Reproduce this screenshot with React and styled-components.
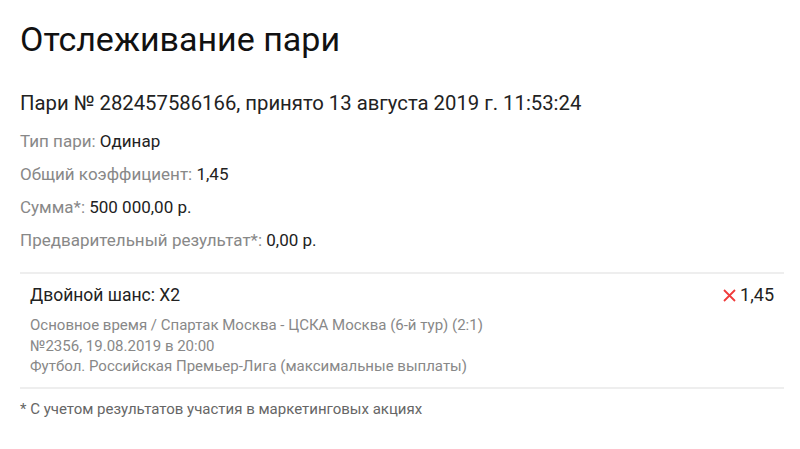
import React from 'react'
import styled, {createGlobalStyle} from 'styled-components'

const Global = createGlobalStyle`
  body {
    margin: 0;
    background: #fff;
    font-family: Roboto, "Noto Sans", sans-serif;
    color: #222;
  }
`

const Page = styled.div`
  padding: 13px 16px 0 20px;
`

const Title = styled.h1`
  margin: 0;
  font-size: 34px;
  font-weight: 400;
  line-height: 52px;
  color: #111;
`

const BetHead = styled.div`
  margin-top: 24px;
  font-size: 20.3px;
  line-height: 28px;
  color: #222;
`

const InfoList = styled.div`
  margin-top: 8px;
  display: flex;
  flex-direction: column;
`

const InfoRow = styled.div`
  font-size: 17px;
  line-height: 33px;
  color: #222;

  span {
    color: #888;
  }
`

const Event = styled.div`
  margin-top: 15px;
  border-top: 2px solid #eee;
  border-bottom: 2px solid #eee;
  padding: 9px 10px 10px 10px;
`

const EventTop = styled.div`
  display: flex;
  justify-content: space-between;
  align-items: center;
  font-size: 17.5px;
  line-height: 24px;
  color: #222;
`

const Odds = styled.div`
  display: flex;
  align-items: center;
  gap: 4px;
  font-size: 18px;
`

const Details = styled.div`
  margin-top: 8px;
  font-size: 15px;
  line-height: 20.5px;
  color: #888;
`

const Note = styled.div`
  margin-top: 11px;
  font-size: 15px;
  line-height: 18px;
  color: #666;
`

const Cross = () => (
  <svg width="13" height="13" viewBox="0 0 13 13">
    <path d="M1 1 L12 12 M12 1 L1 12" stroke="#f03b3b" strokeWidth="1.8" />
  </svg>
)

const App = () => (
  <>
    <Global/>
    <Page>
      <Title>Отслеживание пари</Title>
      <BetHead>Пари № 282457586166, принято 13 августа 2019 г. 11:53:24</BetHead>
      <InfoList>
        <InfoRow><span>Тип пари: </span>Одинар</InfoRow>
        <InfoRow><span>Общий коэффициент: </span>1,45</InfoRow>
        <InfoRow><span>Сумма*: </span>500 000,00 р.</InfoRow>
        <InfoRow><span>Предварительный результат*: </span>0,00 р.</InfoRow>
      </InfoList>
      <Event>
        <EventTop>
          <div>Двойной шанс: X2</div>
          <Odds><Cross/>1,45</Odds>
        </EventTop>
        <Details>
          <div>Основное время / Спартак Москва - ЦСКА Москва (6-й тур) (2:1)</div>
          <div>№2356, 19.08.2019 в 20:00</div>
          <div>Футбол. Российская Премьер-Лига (максимальные выплаты)</div>
        </Details>
      </Event>
      <Note>* С учетом результатов участия в маркетинговых акциях</Note>
    </Page>
  </>
)

export default App
